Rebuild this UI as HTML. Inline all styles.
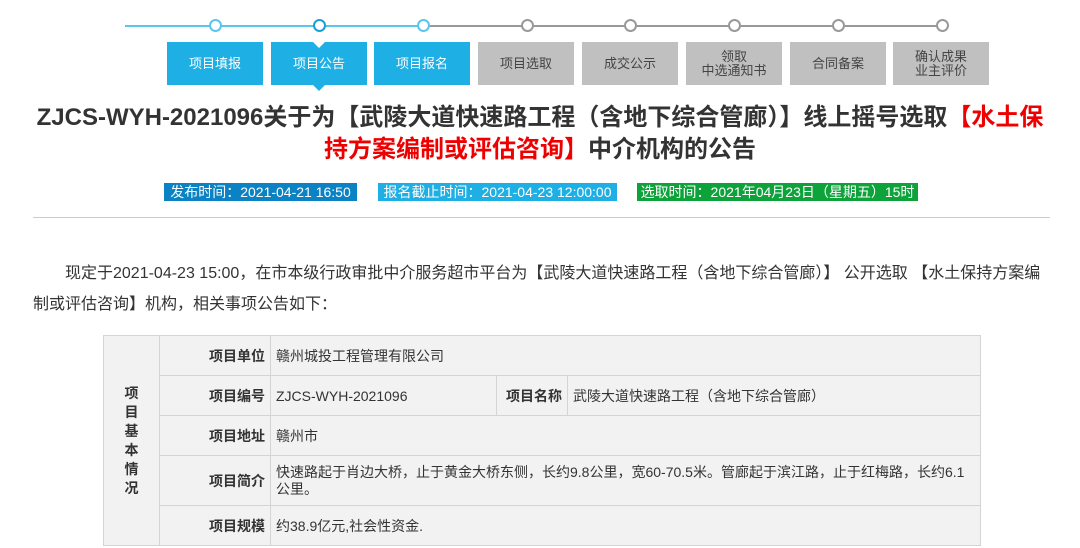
<!DOCTYPE html>
<html><head><meta charset="utf-8"><style>
body{margin:0;width:1080px;height:548px;overflow:hidden;background:#fff;font-family:"Liberation Sans","Noto Sans CJK SC",sans-serif;position:relative}
.a{position:absolute}
.line{position:absolute;top:25px;height:2px}
.c{position:absolute;top:19px;width:9px;height:9px;border-radius:50%;border:2px solid #999;background:#fff}
.b{position:absolute;top:42px;height:43px;width:96px;display:flex;align-items:center;justify-content:center;text-align:center;font-size:13px;line-height:14px;color:#444;background:#c0c0c0}
.b.on{background:#1eafe4;color:#fff}
.tag{position:absolute;top:183px;height:18px;line-height:18px;font-size:14px;color:#fff;text-align:center;white-space:nowrap;overflow:hidden}
table{position:absolute;left:103px;top:335px;width:878px;border-collapse:collapse;background:#f2f2f2;font-size:14px;color:#333}
td{border:1px solid #d4d4d4;height:39px;padding:0 5px}
td.l{font-weight:bold;text-align:right;width:100px}
</style></head><body>
<div class="line" style="left:125px;width:295px;background:#5bc6ec"></div>
<div class="line" style="left:425px;width:520px;background:#999"></div>
<div class="c" style="left:209px;border-color:#5bc6ec"></div>
<div class="c" style="left:313px;border-color:#1a9fd6"></div>
<div class="c" style="left:417px;border-color:#5bc6ec"></div>
<div class="c" style="left:521px"></div><div class="c" style="left:624px"></div><div class="c" style="left:728px"></div><div class="c" style="left:832px"></div><div class="c" style="left:936px"></div>
<div class="b on" style="left:167px">项目填报</div>
<div class="b on" style="left:271px">项目公告</div>
<div class="b on" style="left:374px">项目报名</div>
<div class="b" style="left:478px">项目选取</div>
<div class="b" style="left:582px">成交公示</div>
<div class="b" style="left:686px">领取<br>中选通知书</div>
<div class="b" style="left:790px">合同备案</div>
<div class="b" style="left:893px">确认成果<br>业主评价</div>
<div class="a" style="left:313px;top:42px;border:6px solid transparent;border-top-color:#fff"></div>
<div class="a" style="left:313px;top:85px;border:6px solid transparent;border-top-color:#1eafe4"></div>
<div class="a" style="left:30px;top:102px;width:1020px;text-align:center;font-size:24px;font-weight:bold;line-height:32px;color:#333">ZJCS-WYH-2021096关于为【武陵大道快速路工程（含地下综合管廊）】线上摇号选取<span style="color:#e00">【水土保持方案编制或评估咨询】</span>中介机构的公告</div>
<div class="tag" style="left:164px;width:193px;background:#0a82c4">发布时间：2021-04-21 16:50</div>
<div class="tag" style="left:378px;width:239px;background:#1eafe4">报名截止时间：2021-04-23 12:00:00</div>
<div class="tag" style="left:637px;width:281px;background:#0ea23a">选取时间：2021年04月23日（星期五）15时</div>
<div class="a" style="left:33px;top:217px;width:1017px;height:1px;background:#ccc"></div>
<div class="a" style="left:33px;top:258px;width:1010px;font-size:16px;line-height:31px;color:#333;text-indent:32px">现定于2021-04-23 15:00，在市本级行政审批中介服务超市平台为【武陵大道快速路工程（含地下综合管廊）】 公开选取 【水土保持方案编制或评估咨询】机构，相关事项公告如下：</div>
<table>
<tr><td rowspan="5" style="width:45px;text-align:center;font-weight:bold;line-height:19px">项<br>目<br>基<br>本<br>情<br>况</td><td class="l">项目单位</td><td colspan="3">赣州城投工程管理有限公司</td></tr>
<tr><td class="l">项目编号</td><td style="width:215px">ZJCS-WYH-2021096</td><td class="l" style="width:60px">项目名称</td><td>武陵大道快速路工程（含地下综合管廊）</td></tr>
<tr><td class="l">项目地址</td><td colspan="3">赣州市</td></tr>
<tr><td class="l" style="height:49px">项目简介</td><td colspan="3" style="line-height:17px">快速路起于肖边大桥，止于黄金大桥东侧，长约9.8公里，宽60-70.5米。管廊起于滨江路，止于红梅路，长约6.1公里。</td></tr>
<tr><td class="l">项目规模</td><td colspan="3">约38.9亿元,社会性资金.</td></tr>
</table>
</body></html>
